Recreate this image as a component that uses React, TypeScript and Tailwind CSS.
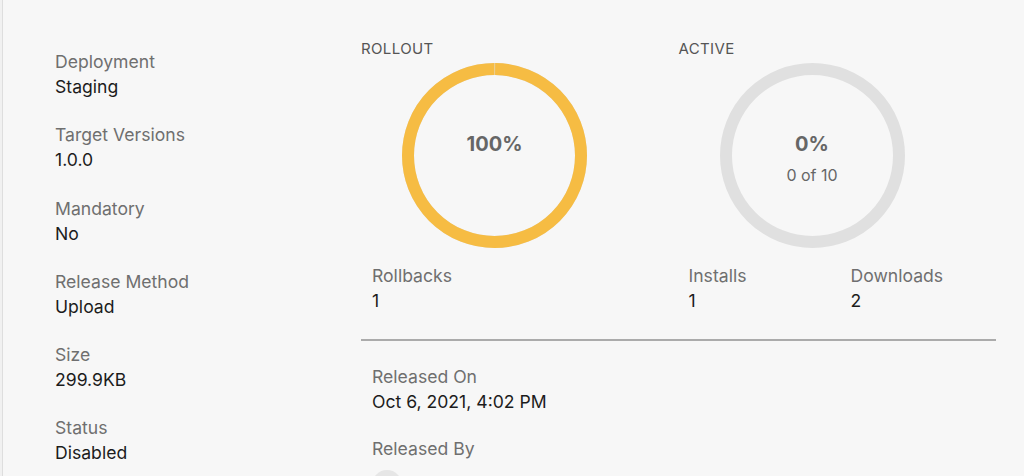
import React from "react";

type Field = { label: string; value: string };

const DETAILS: Field[] = [
  { label: "Deployment", value: "Staging" },
  { label: "Target Versions", value: "1.0.0" },
  { label: "Mandatory", value: "No" },
  { label: "Release Method", value: "Upload" },
  { label: "Size", value: "299.9KB" },
  { label: "Status", value: "Disabled" },
];

const FONT = { fontFamily: "Inter, 'Noto Sans', sans-serif" };

function Stat({ label, value, className = "" }: { label: string; value: string; className?: string }) {
  return (
    <div className={className}>
      <div className="text-[17.6px] leading-[25px] text-[#6f6f6f]">{label}</div>
      <div className="text-[17.6px] leading-[25px] text-[#1c1c1c]">{value}</div>
    </div>
  );
}

function Donut({ percent, color, children }: { percent: number; color: string; children: React.ReactNode }) {
  const r = 86.5;
  const c = 2 * Math.PI * r;
  const arc = percent >= 100 ? c - 1.2 : (c * percent) / 100;
  return (
    <div className="relative w-[185px] h-[185px]">
      <svg width="185" height="185" viewBox="0 0 185 185" className="absolute inset-0">
        <circle cx="92.5" cy="92.5" r={r} fill="none" stroke="#e0e0e0" strokeWidth="12" />
        {percent > 0 && (
          <circle
            cx="92.5"
            cy="92.5"
            r={r}
            fill="none"
            stroke={color}
            strokeWidth="12"
            strokeDasharray={`${arc} ${c - arc}`}
            strokeDashoffset={-0.6}
            transform="rotate(-90 92.5 92.5)"
          />
        )}
      </svg>
      <div className="absolute inset-0 flex flex-col items-center pt-[69px]">{children}</div>
    </div>
  );
}

export default function App() {
  return (
    <div className="w-[1024px] h-[476px] bg-[#f1f1f1] overflow-hidden" style={FONT}>
      <div className="ml-[2px] h-full border-l border-[#dedede] bg-[#f7f7f7] flex">
        <div className="w-[358px] pl-[52px] pt-[49px] flex flex-col gap-[23.3px]">
          {DETAILS.map((d) => (
            <Stat key={d.label} label={d.label} value={d.value} />
          ))}
        </div>

        <div className="w-[635px] pt-[38px]">
          <div className="grid grid-cols-2">
            <div>
              <div className="text-[15px] leading-[20px] pt-[1px] text-[#555555] tracking-wide">ROLLOUT</div>
              <div className="ml-[41px] mt-[4px]">
                <Donut percent={100} color="#f6bc43">
                  <span className="text-[20px] leading-[24px] font-bold text-[#666666]">100%</span>
                </Donut>
              </div>
              <Stat label="Rollbacks" value="1" className="pl-[11px] mt-[15px]" />
            </div>
            <div>
              <div className="text-[15px] leading-[20px] pt-[1px] text-[#555555] tracking-wide">ACTIVE</div>
              <div className="ml-[41px] mt-[4px]">
                <Donut percent={0} color="#f6bc43">
                  <span className="text-[20px] leading-[24px] font-bold text-[#666666]">0%</span>
                  <span className="mt-[9px] text-[16px] leading-[20px] text-[#666666]">0 of 10</span>
                </Donut>
              </div>
              <div className="grid grid-cols-[162px_1fr] pl-[10px] mt-[15px]">
                <Stat label="Installs" value="1" />
                <Stat label="Downloads" value="2" />
              </div>
            </div>
          </div>

          <div className="mt-[26px] h-[2px] bg-[#ababab]" />

          <div className="pl-[11px] pt-[23px] flex flex-col gap-[22px]">
            <Stat label="Released On" value="Oct 6, 2021, 4:02 PM" />
            <div>
              <div className="text-[17.6px] leading-[25px] text-[#6f6f6f]">Released By</div>
              <div className="mt-[9px] w-[30px] h-[30px] rounded-full bg-[#e6e6e6]" />
            </div>
          </div>
        </div>
      </div>
    </div>
  );
}
